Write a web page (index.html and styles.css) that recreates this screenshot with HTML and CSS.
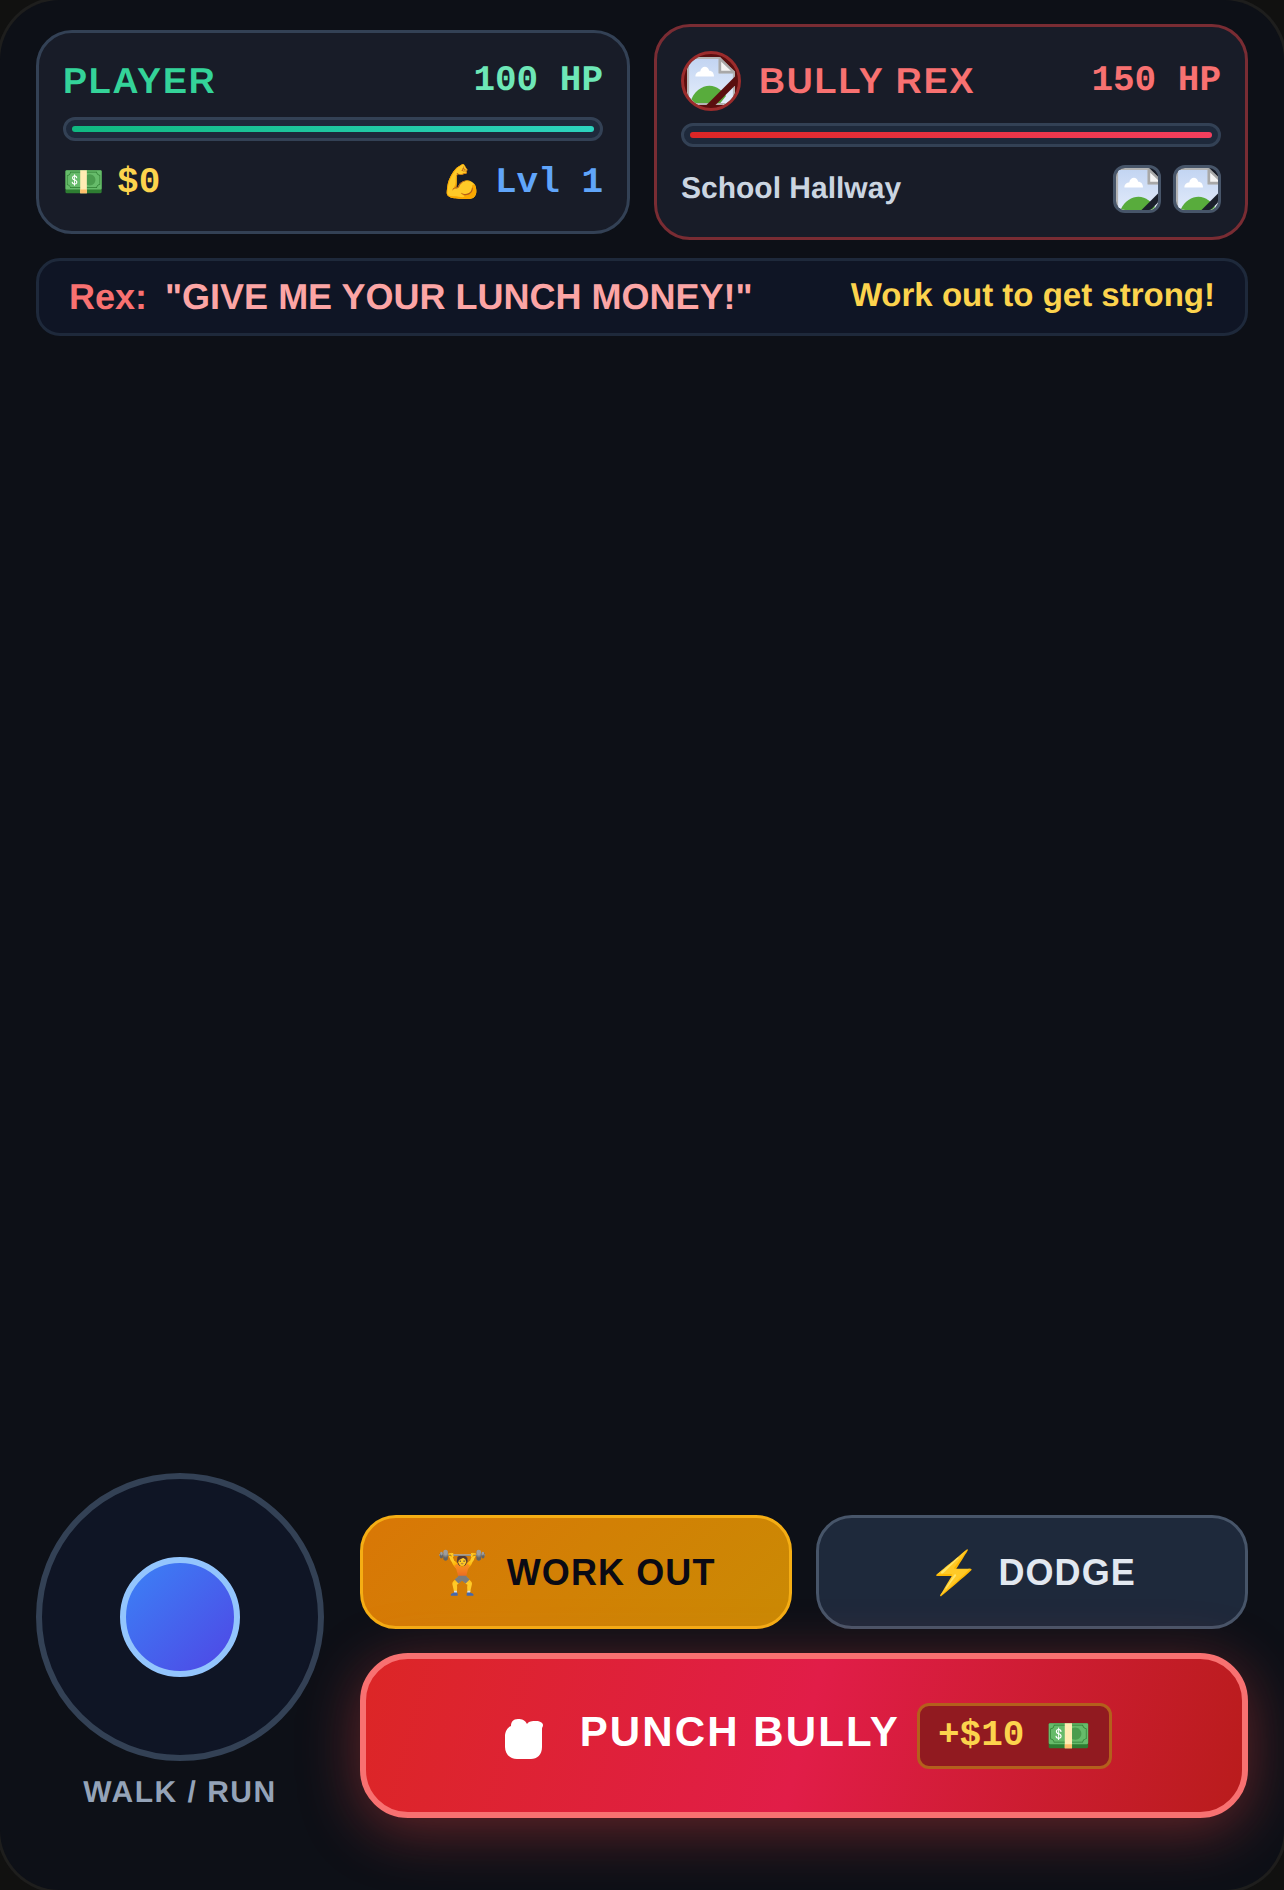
FILE: index.html
```html
<!DOCTYPE html>
<html lang="en">
<head>
  <meta charset="UTF-8">
  <title>Punch Bully</title>
  <link rel="stylesheet" href="styles.css">
</head>
<body>
  <div class="phone">
    <div class="hud">
      <div class="card player-card">
        <div class="card-head">
          <span class="name player-name">PLAYER</span>
          <span class="hp player-hp">100 HP</span>
        </div>
        <div class="bar"><div class="fill player-fill"></div></div>
        <div class="card-foot">
          <span class="stat cash"><span class="emoji">💵</span> $0</span>
          <span class="stat level"><span class="emoji">💪</span> Lvl 1</span>
        </div>
      </div>

      <div class="card bully-card">
        <div class="card-head">
          <div class="who">
            <div class="avatar">
              <svg viewBox="0 0 16 16" width="48" height="48"><use href="#broken"/></svg>
            </div>
            <span class="name bully-name">BULLY REX</span>
          </div>
          <span class="hp bully-hp">150 HP</span>
        </div>
        <div class="bar"><div class="fill bully-fill"></div></div>
        <div class="card-foot">
          <span class="place">School Hallway</span>
          <div class="thumbs">
            <div class="thumb"><svg viewBox="0 0 16 16" width="48" height="48"><use href="#broken"/></svg></div>
            <div class="thumb"><svg viewBox="0 0 16 16" width="48" height="48"><use href="#broken"/></svg></div>
          </div>
        </div>
      </div>
    </div>

    <div class="dialog">
      <p class="line"><span class="speaker">Rex:</span><span class="quote">"GIVE ME YOUR LUNCH MONEY!"</span></p>
      <p class="hint">Work out to get strong!</p>
    </div>

    <div class="stage"></div>

    <div class="controls">
      <div class="stick-col">
        <div class="stick"><div class="knob"></div></div>
        <div class="stick-label">WALK / RUN</div>
      </div>
      <div class="actions">
        <div class="action-row">
          <button class="btn btn-work"><span class="emoji btn-emoji">🏋️</span>WORK OUT</button>
          <button class="btn btn-dodge"><span class="emoji btn-emoji">⚡</span>DODGE</button>
        </div>
        <button class="btn btn-punch">
          <svg class="fist" viewBox="0 0 38 40" width="38" height="40"><path d="M0 17C0 12 3 8 6 7C6 3 8 0 13 0C17 0 20 1 22 5C24 2 27 2 31 2C35 2 38 4 38 6C38 8 37 8 37 10L37 28C37 36 32 40 26 40L12 40C5 40 0 35 0 28Z" fill="#fff"/></svg>
          <span class="punch-text">PUNCH BULLY</span>
          <span class="reward">+$10 <span class="emoji reward-emoji">💵</span></span>
        </button>
      </div>
    </div>
  </div>

  <!-- chrome's missing image icon, redrawn -->
  <svg class="defs" width="0" height="0">
    <defs>
      <linearGradient id="sky" x1="0" y1="0" x2="0" y2="1">
        <stop offset="0" stop-color="#c3d5f2"/>
        <stop offset="1" stop-color="#e6eefc"/>
      </linearGradient>
      <symbol id="broken" viewBox="0 0 16 16">
        <path d="M0 0H11L16 5V16H0Z" fill="#b4b4b4"/>
        <path d="M.7 .7H10.5V5.5H15.3V16H.7Z" fill="url(#sky)"/>
        <path d="M11 .6L15.6 5H11Z" fill="#f4f4f4" stroke="#a8a8a8" stroke-width=".8"/>
        <path d="M2.8 6.5C2.8 5.3 3.6 4.8 4.4 4.8C4.8 2.8 7 2.8 7.4 4.6C8.4 4.6 9 5.4 9 6.5Z" fill="#fff"/>
        <path d="M1 15.5C2 11.5 5 9.6 7.5 9.6C10 9.6 12 11.5 13 13L11 15.5Z" fill="#58ac3c"/>
        <path d="M0 15.3H16V16H0Z" fill="#b4b4b4"/>
        <path d="M6.5 16L16 6.5V9.5L9.5 16Z" fill="currentColor"/>
      </symbol>
    </defs>
  </svg>
</body>
</html>
```

FILE: styles.css
```css
* {
  box-sizing: border-box;
}

html, body {
  margin: 0;
  height: 100%;
}

body {
  background: #111110;
  font-family: "Liberation Sans", sans-serif;
  text-rendering: geometricPrecision;
  overflow: hidden;
}

.phone {
  width: 1284px;
  height: 1890px;
  border-radius: 60px;
  background: #0d1017;
  box-shadow: 0 0 0 3px #1e1e1d;
  padding: 24px 36px 72px;
  display: flex;
  flex-direction: column;
}

.emoji {
  font-family: "Noto Color Emoji", sans-serif;
  font-weight: 400;
}

/* === HUD === */
.hud {
  display: flex;
  align-items: center;
  gap: 24px;
}

.card {
  flex: 1;
  border: 3px solid #334155;
  border-radius: 36px;
  background: #181c28;
  padding: 24px;
}

.bully-card {
  border-color: #792c33;
}

.card-head {
  display: flex;
  justify-content: space-between;
  align-items: center;
  height: 48px;
  margin-bottom: 12px;
}

.bully-card .card-head {
  height: 60px;
}

.who {
  display: flex;
  align-items: center;
  gap: 18px;
}

.name {
  font-size: 36px;
  font-weight: 700;
  letter-spacing: 1.8px;
}

.player-name { color: #34d399; }
.bully-name { color: #f87171; }

.hp {
  font-family: "Liberation Mono", monospace;
  font-size: 36px;
  font-weight: 700;
  margin-top: -1px;
}

.player-hp { color: #6ee7b7; }
.bully-hp { color: #f87171; }

.avatar {
  width: 60px;
  height: 60px;
  border: 3px solid #9b2c2c;
  border-radius: 50%;
  overflow: hidden;
  background: #5a0f0f;
  color: #5a0f0f;
  display: flex;
  justify-content: center;
  align-items: center;
}

.thumb svg {
  display: block;
}

.bar {
  height: 24px;
  border: 3px solid #334155;
  border-radius: 12px;
  background: #1e293b;
  padding: 6px;
}

.fill {
  height: 6px;
  border-radius: 3px;
}

.player-fill { background: linear-gradient(90deg, #10b981, #2dd4bf); }
.bully-fill { background: linear-gradient(90deg, #dc2626, #f43f5e); }

.card-foot {
  display: flex;
  justify-content: space-between;
  align-items: center;
  height: 48px;
  margin-top: 18px;
}

.stat {
  font-family: "Liberation Mono", monospace;
  font-size: 36px;
  font-weight: 700;
  display: flex;
  align-items: center;
  gap: 13px;
  margin-top: -2px;
}

.stat .emoji {
  font-size: 33px;
}

.cash { color: #fcd34d; }
.level { color: #60a5fa; }

.place {
  font-size: 30px;
  font-weight: 700;
  color: #cbd5e1;
}

.thumbs {
  display: flex;
  gap: 12px;
}

.thumb {
  width: 48px;
  height: 48px;
  border: 3px solid #475569;
  border-radius: 12px;
  overflow: hidden;
  color: #1a1f2b;
}

/* === Dialog === */
.dialog {
  display: flex;
  justify-content: space-between;
  align-items: center;
  height: 78px;
  margin-top: 18px;
  padding: 0 30px;
  border: 3px solid #1e293b;
  border-radius: 24px;
  background: #0f1525;
}

.dialog p {
  margin: 0;
  font-weight: 700;
}

.line {
  font-size: 36px;
}

.speaker {
  color: #f87171;
  margin-right: 18px;
}

.quote { color: #fca5a5; }

.dialog .hint {
  font-size: 33px;
  color: #fcd34d;
  margin-top: -4px;
}

.stage {
  flex: 1;
}

/* === Controls === */
.controls {
  display: flex;
  align-items: flex-end;
  gap: 36px;
}

.stick-col {
  width: 288px;
  flex-shrink: 0;
  display: flex;
  flex-direction: column;
  align-items: center;
}

.stick {
  width: 288px;
  height: 288px;
  border: 6px solid #334155;
  border-radius: 50%;
  background: #0f1525;
  display: flex;
  justify-content: center;
  align-items: center;
}

.knob {
  width: 120px;
  height: 120px;
  border: 6px solid #93c5fd;
  border-radius: 50%;
  background: linear-gradient(135deg, #3b82f6, #4f46e5);
}

.stick-label {
  font-size: 30px;
  font-weight: 700;
  letter-spacing: 1.5px;
  color: #94a3b8;
  margin-top: 12px;
  padding-bottom: 5px;
  line-height: 40px;
}

.actions {
  flex: 1;
  display: flex;
  flex-direction: column;
  gap: 24px;
}

.action-row {
  display: flex;
  gap: 24px;
}

.btn {
  font-family: "Liberation Sans", sans-serif;
  font-weight: 700;
  display: flex;
  justify-content: center;
  align-items: center;
  cursor: pointer;
}

.btn-work,
.btn-dodge {
  flex: 1;
  height: 114px;
  padding: 2px 0 0;
  font-size: 36px;
  letter-spacing: 1.1px;
  border-radius: 36px;
  border: 3px solid #f5ae14;
}

.btn-work {
  background: linear-gradient(135deg, #d97706, #ca8a04);
  color: #0a0a14;
}

.btn-dodge {
  background: #1e293b;
  border-color: #475569;
  color: #e2e8f0;
}

.btn-emoji {
  font-size: 42px;
  margin: -2px 18px 0 0;
  letter-spacing: 0;
}

.btn-punch {
  height: 165px;
  padding: 0 0 0 9px;
  font-size: 42px;
  letter-spacing: 2.1px;
  color: #fff;
  border-radius: 48px;
  border: 6px solid #f87171;
  background: linear-gradient(105deg, #dc2626, #e11d48, #b91c1c);
  box-shadow: 0 12px 60px rgba(239, 68, 68, 0.4);
}

.fist {
  margin-right: 37px;
  margin-top: 6px;
}

.punch-text {
  margin-top: -8px;
}

.reward {
  font-family: "Liberation Mono", monospace;
  font-size: 36px;
  letter-spacing: 0;
  color: #fcd34d;
  display: flex;
  align-items: center;
  gap: 22px;
  height: 66px;
  margin-left: 17px;
  padding: 0 18px;
  border: 3px solid #b45f1c;
  border-radius: 12px;
  background: #911a20;
}

.defs {
  position: absolute;
}
```
